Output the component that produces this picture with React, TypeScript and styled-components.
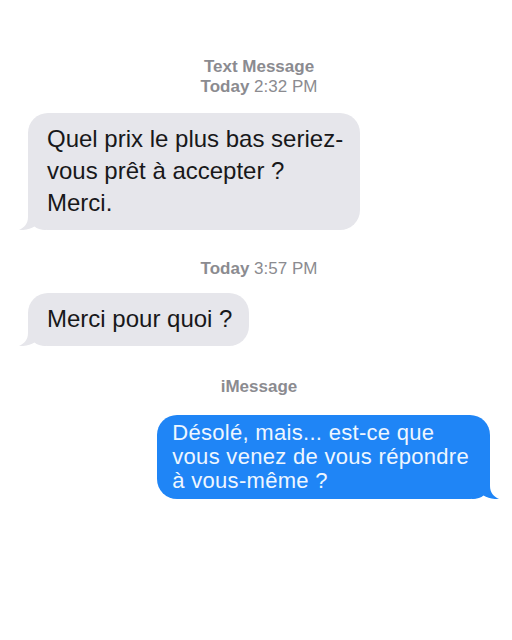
import React from "react";
import styled, { createGlobalStyle } from "styled-components";

const Global = createGlobalStyle`
  html, body { margin: 0; padding: 0; background: #ffffff; }
  body { font-family: "Liberation Sans", Arial, Helvetica, sans-serif; -webkit-font-smoothing: antialiased; }
`;

const Page = styled.div`
  width: 512px;
  min-height: 640px;
  display: flex;
  flex-direction: column;
  padding-top: 57px;
  box-sizing: border-box;
  background: #ffffff;
`;

const Stamp = styled.div<{ $gapTop: number }>`
  margin-top: ${(p) => p.$gapTop}px;
  padding-left: 6px;
  text-align: center;
  font-size: 17px;
  line-height: 20px;
  color: #8b8b90;
  font-weight: 400;
`;

const Strong = styled.span`
  font-weight: 700;
`;

const Row = styled.div<{ $out?: boolean; $gapTop: number }>`
  display: flex;
  justify-content: ${(p) => (p.$out ? "flex-end" : "flex-start")};
  margin-top: ${(p) => p.$gapTop}px;
  padding: ${(p) => (p.$out ? "0 22px 0 0" : "0 0 0 28px")};
`;

const Bubble = styled.div<{ $out?: boolean }>`
  position: relative;
  width: fit-content;
  border-radius: 20px;
  background: ${(p) => (p.$out ? "#1f85f6" : "#e6e6eb")};
  color: ${(p) => (p.$out ? "#eef6ff" : "#18181a")};
  font-size: ${(p) => (p.$out ? "22px" : "24px")};
  line-height: ${(p) => (p.$out ? "24px" : "32px")};
  letter-spacing: ${(p) => (p.$out ? "0.3px" : "0")};
  padding: ${(p) => (p.$out ? "6px 21px 6px 15px" : "10px 17px 11px 19px")};
  white-space: nowrap;
`;

const Tail = styled.svg<{ $out?: boolean }>`
  position: absolute;
  bottom: 0;
  width: 27px;
  height: 23px;
  ${(p) => (p.$out ? "right: -9px; transform: scaleX(-1);" : "left: -9px;")}
`;

const TailShape: React.FC<{ out?: boolean }> = ({ out }) => (
  <Tail $out={out} viewBox="0 0 27 23" aria-hidden>
    <path
      d="M9 0 L9 10 C9 16.5 5.5 20.5 0 23 C6.5 23.4 11.5 22 15.5 19.5 C18 21.6 21.5 23 27 23 L27 0 Z"
      fill={out ? "#1f85f6" : "#e6e6eb"}
    />
  </Tail>
);

export default function App() {
  return (
    <>
      <Global />
      <Page>
        <Stamp $gapTop={0}>
          <Strong>Text Message</Strong>
          <br />
          <Strong>Today</Strong> 2:32 PM
        </Stamp>

        <Row $gapTop={16}>
          <Bubble>
            Quel prix le plus bas seriez-
            <br />
            vous prêt à accepter ?
            <br />
            Merci.
            <TailShape />
          </Bubble>
        </Row>

        <Stamp $gapTop={29}>
          <Strong>Today</Strong> 3:57 PM
        </Stamp>

        <Row $gapTop={14}>
          <Bubble>
            Merci pour quoi ?
            <TailShape />
          </Bubble>
        </Row>

        <Stamp $gapTop={31}>
          <Strong>iMessage</Strong>
        </Stamp>

        <Row $out $gapTop={18}>
          <Bubble $out>
            Désolé, mais... est-ce que
            <br />
            vous venez de vous répondre
            <br />
            à vous-même ?
            <TailShape out />
          </Bubble>
        </Row>
      </Page>
    </>
  );
}
